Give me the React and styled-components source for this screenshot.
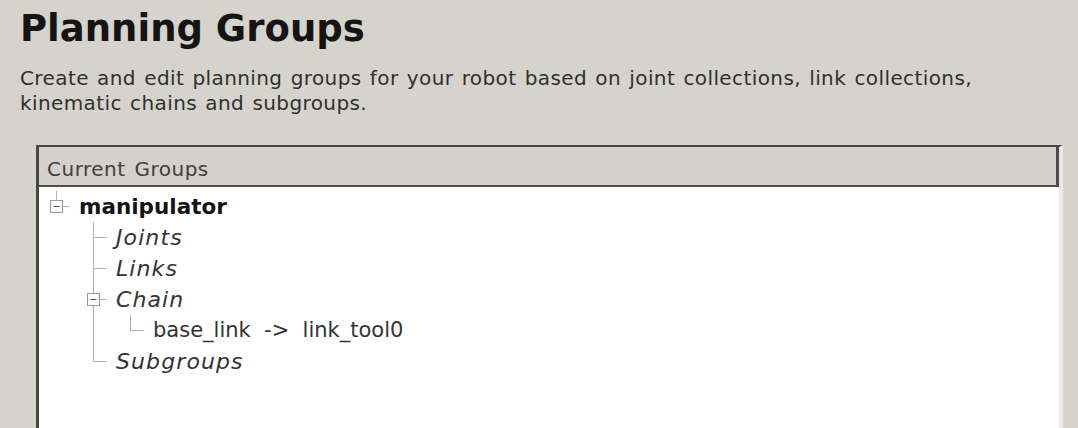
import React from 'react';
import styled, { createGlobalStyle } from 'styled-components';

const GlobalStyle = createGlobalStyle`
  html, body {
    margin: 0;
    padding: 0;
    background: #d6d3cc;
    overflow: hidden;
  }
  body {
    font-family: "DejaVu Sans", Verdana, sans-serif;
  }
`;

const Page = styled.div`
  padding: 7px 0 0 20px;
  height: 428px;
  box-sizing: border-box;
`;

const Title = styled.h1`
  margin: 0;
  font-size: 37px;
  line-height: 44px;
  font-weight: bold;
  color: #141414;
`;

const Description = styled.p`
  margin: 15px 0 0;
  font-size: 20px;
  line-height: 25px;
  color: #303030;
  letter-spacing: 0.4px;
  word-spacing: 1.5px;
`;

const Frame = styled.section`
  margin: 29px 0 0 16px;
  width: 1027px;
  height: 300px;
  box-sizing: border-box;
  border-top: 2px solid #474747;
  border-left: 3px solid #474747;
  border-right: 4px solid #ebe9e5;
  background: #ffffff;
  display: flex;
  flex-direction: column;
`;

const Header = styled.div`
  height: 40px;
  background: #d5d1ca;
  border-bottom: 2px solid #4d4d4d;
  border-right: 3px solid #4d4d4d;
  display: flex;
  align-items: center;
  padding: 5px 0 0 8px;
  box-sizing: border-box;
  font-size: 20px;
  color: #404040;
  letter-spacing: 0.5px;
  word-spacing: 2px;
`;

const TreeBody = styled.div`
  padding-top: 4px;
  display: flex;
  flex-direction: column;
`;

const Row = styled.div`
  display: flex;
  align-items: center;
  height: 31px;
`;

const BranchSvg = styled.svg`
  flex: none;
  display: block;
  line {
    stroke: #b2b2b2;
    stroke-width: 1;
  }
  rect {
    fill: #ffffff;
    stroke: #9a9a9a;
  }
  .minus {
    stroke: #555555;
  }
`;

const Label = styled.span`
  font-size: ${(p) => (p.$bold ? '21.5px' : p.$italic ? '22px' : '21px')};
  font-weight: ${(p) => (p.$bold ? 'bold' : 'normal')};
  font-style: ${(p) => (p.$italic ? 'italic' : 'normal')};
  letter-spacing: ${(p) => (p.$italic ? '1.1px' : '0')};
  color: ${(p) => (p.$bold ? '#141414' : '#333333')};
  white-space: pre;
  padding-left: 3px;
  line-height: 31px;
`;

const C = 17.5;

const Guide = () => (
  <BranchSvg width="37" height="31" viewBox="0 0 37 31">
    <line x1={C} y1="0" x2={C} y2="31" />
  </BranchSvg>
);

const Blank = () => <BranchSvg width="37" height="31" viewBox="0 0 37 31" />;

const Branch = ({ top, bottom, expander }) => (
  <BranchSvg width="37" height="31" viewBox="0 0 37 31">
    {top && <line x1={C} y1="0" x2={C} y2={expander ? 9.5 : 15.5} />}
    {bottom && <line x1={C} y1={expander ? 21.5 : 15.5} x2={C} y2="31" />}
    <line x1={expander ? C + 6 : C} y1="15.5" x2={C + 13} y2="15.5" />
    {expander && (
      <>
        <rect x={C - 6} y="9.5" width="12" height="12" />
        <line className="minus" x1={C - 3} y1="15.5" x2={C + 3} y2="15.5" />
      </>
    )}
  </BranchSvg>
);

const rows = [
  { label: 'manipulator', bold: true, guides: [], top: true, bottom: false, expander: true },
  { label: 'Joints', italic: true, guides: [false], top: true, bottom: true },
  { label: 'Links', italic: true, guides: [false], top: true, bottom: true },
  { label: 'Chain', italic: true, guides: [false], top: true, bottom: true, expander: true },
  { label: 'base_link  ->  link_tool0', guides: [false, true], top: true, bottom: false },
  { label: 'Subgroups', italic: true, guides: [false], top: true, bottom: false },
];

export default function App() {
  return (
    <>
      <GlobalStyle />
      <Page>
        <Title>Planning Groups</Title>
        <Description>
          Create and edit planning groups for your robot based on joint collections, link collections,
          <br />
          kinematic chains and subgroups.
        </Description>
        <Frame>
          <Header>Current Groups</Header>
          <TreeBody>
            {rows.map((r, i) => (
              <Row key={i}>
                {r.guides.map((g, j) => (g ? <Guide key={j} /> : <Blank key={j} />))}
                <Branch top={r.top} bottom={r.bottom} expander={r.expander} />
                <Label $bold={r.bold} $italic={r.italic}>
                  {r.label}
                </Label>
              </Row>
            ))}
          </TreeBody>
        </Frame>
      </Page>
    </>
  );
}
